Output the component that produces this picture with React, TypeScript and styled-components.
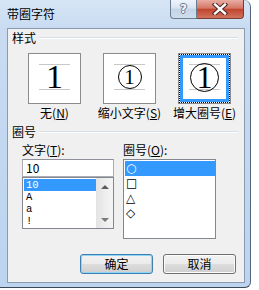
import React from "react";
import styled, { createGlobalStyle } from "styled-components";

const Global = createGlobalStyle`
  html, body { margin: 0; padding: 0; background: #ffffff; }
  body {
    font-family: "Noto Sans CJK SC", "Noto Sans", sans-serif;
    font-size: 12px;
    color: #000;
  }
`;

const Window = styled.div`
  width: 251px;
  height: 288px;
  box-sizing: border-box;
  display: flex;
  flex-direction: column;
  background: linear-gradient(180deg, #d7e6f6 0px, #c8dbf1 28px, #bcd4ef 100%);
  border-right: 1px solid #55657a;
  border-bottom: 1px solid #3d4854;
  border-radius: 0 7px 6px 0;
`;

const TitleBar = styled.div`
  height: 28px;
  flex-shrink: 0;
  display: flex;
  align-items: flex-start;
  padding: 0 6px 0 7px;
`;

const Title = styled.div`
  margin-top: 6px;
  line-height: 16px;
  font-size: 12px;
  color: #000;
`;

const CaptionButtons = styled.div`
  margin-left: auto;
  display: flex;
  height: 19px;
`;

const HelpButton = styled.div`
  width: 27px;
  height: 19px;
  box-sizing: border-box;
  border: 1px solid #6b7d93;
  border-top: none;
  border-radius: 0 0 0 4px;
  background: linear-gradient(180deg, #eef3fa 0%, #d9e4f1 45%, #c3d3e7 50%, #d0ddec 100%);
  display: flex;
  align-items: center;
  justify-content: center;
  font-family: "DejaVu Sans", sans-serif;
  font-weight: bold;
  font-size: 12px;
  line-height: 14px;
  color: #f4f7fb;
  text-shadow: 1px 0 0 #6a778c, -1px 0 0 #6a778c, 0 1px 0 #6a778c, 0 -1px 0 #6a778c;
`;

const CloseButton = styled.div`
  width: 47px;
  height: 19px;
  box-sizing: border-box;
  border: 1px solid #7d3a31;
  border-top: none;
  border-left: none;
  border-radius: 0 0 4px 0;
  background: linear-gradient(180deg, #e9ada3 0%, #d57867 45%, #c2452f 52%, #d07360 100%);
  display: flex;
  align-items: center;
  justify-content: center;
`;

const Client = styled.div`
  flex: 1;
  margin: 0 5px 4px 7px;
  box-sizing: border-box;
  border: 1px solid #8a9bb0;
  background: #f0f0f0;
  display: flex;
  flex-direction: column;
`;

const GroupHeader = styled.div<{ $top: number }>`
  height: 16px;
  margin-top: ${(p) => p.$top}px;
  padding: 0 6px 0 4px;
  display: flex;
  align-items: center;
  gap: 3px;
  line-height: 16px;
`;

const Rule = styled.div`
  flex: 1;
  height: 0;
  border-top: 1px solid #d5dfe5;
  border-bottom: 1px solid #ffffff;
`;

const OptionGrid = styled.div`
  display: grid;
  grid-template-columns: repeat(3, 75px);
  padding-left: 9px;
  margin-top: 7px;
`;

const Option = styled.div`
  display: flex;
  flex-direction: column;
  align-items: center;
  gap: 2px;
`;

const Box = styled.div<{ $selected?: boolean }>`
  width: 53px;
  height: 51px;
  box-sizing: border-box;
  border: 1px solid #8b8b8b;
  background: #ffffff;
  display: flex;
  flex-direction: column;
  align-items: stretch;
  padding-top: ${(p) => (p.$selected ? 0 : 10)}px;
`;

const FocusRing = styled.div`
  flex: 1;
  border: 1px dotted #000;
  display: flex;
`;

const Highlight = styled.div`
  flex: 1;
  border: 3px solid #3399ff;
  padding-top: 6px;
  display: flex;
  flex-direction: column;
  align-items: center;
`;

const Sample = styled.div`
  width: 31px;
  height: 26px;
  align-self: center;
  box-sizing: border-box;
  border-top: 1px solid #c8c8c8;
  border-bottom: 1px solid #c8c8c8;
  display: flex;
  align-items: center;
  justify-content: center;
`;

const Digit = styled.span<{ $size: number }>`
  font-family: "Liberation Serif", "Times New Roman", serif;
  font-size: ${(p) => p.$size}px;
  line-height: ${(p) => p.$size}px;
  color: #000;
`;

const Ring = styled.span<{ $d: number }>`
  width: ${(p) => p.$d}px;
  height: ${(p) => p.$d}px;
  flex-shrink: 0;
  box-sizing: border-box;
  border: 1.5px solid #000;
  border-radius: 50%;
  display: flex;
  align-items: center;
  justify-content: center;
`;

const OptionLabel = styled.div`
  line-height: 14px;
  white-space: nowrap;
`;

const Fields = styled.div`
  display: flex;
  margin-top: 3px;
  padding-left: 14px;
`;

const Field = styled.div<{ $w: number; $gap?: number }>`
  width: ${(p) => p.$w}px;
  margin-left: ${(p) => p.$gap ?? 0}px;
  display: flex;
  flex-direction: column;
`;

const FieldLabel = styled.div`
  line-height: 14px;
  margin-bottom: 2px;
  white-space: nowrap;
`;

const TextBox = styled.div`
  height: 18px;
  box-sizing: border-box;
  border: 1px solid #abadb3;
  border-top-color: #8e9199;
  background: #ffffff;
  padding-left: 3px;
  line-height: 16px;
`;

const ListBox = styled.div<{ $h: number }>`
  height: ${(p) => p.$h}px;
  box-sizing: border-box;
  border: 1px solid #828790;
  background: #ffffff;
  display: flex;
`;

const Items = styled.div<{ $pad: number }>`
  flex: 1;
  padding: ${(p) => p.$pad}px 0 0 1px;
  display: flex;
  flex-direction: column;
`;

const Item = styled.div<{ $h: number; $active?: boolean }>`
  height: ${(p) => p.$h}px;
  line-height: ${(p) => p.$h}px;
  padding-left: 2px;
  font-family: "Liberation Mono", "Courier New", monospace;
  font-size: 10.5px;
  background: ${(p) => (p.$active ? "#3399ff" : "transparent")};
  color: ${(p) => (p.$active ? "#ffffff" : "#000000")};
`;

const ShapeItem = styled(Item)`
  font-family: "DejaVu Sans", sans-serif;
  font-size: 12px;
  font-variant-emoji: text;
  padding-left: 1px;
`;

const ScrollBar = styled.div`
  width: 17px;
  background: linear-gradient(90deg, #e3e3e3 0%, #efefef 60%, #f4f4f4 100%);
  display: flex;
  flex-direction: column;
  justify-content: space-between;
`;

const ScrollButton = styled.div`
  height: 17px;
  display: flex;
  align-items: center;
  justify-content: center;
`;

const Arrow = styled.span<{ $down?: boolean }>`
  width: 0;
  height: 0;
  border-left: 4px solid transparent;
  border-right: 4px solid transparent;
  ${(p) =>
    p.$down
      ? "border-top: 4px solid #7a7a7a;"
      : "border-bottom: 4px solid #5c5c5c;"}
`;

const ButtonRow = styled.div`
  margin-top: auto;
  margin-bottom: 8px;
  padding-right: 8px;
  display: flex;
  justify-content: flex-end;
  gap: 10px;
`;

const Button = styled.div<{ $default?: boolean }>`
  width: 73px;
  height: 20px;
  box-sizing: border-box;
  border: 1px solid ${(p) => (p.$default ? "#3c7fb1" : "#707070")};
  border-radius: 3px;
  background: linear-gradient(180deg, #f2f2f2 0%, #ebebeb 50%, #dddddd 51%, #cfcfcf 100%);
  box-shadow: ${(p) => (p.$default ? "inset 0 0 0 1px #8fd3f5" : "inset 0 0 0 1px #fbfbfb")};
  display: flex;
  align-items: center;
  justify-content: center;
  line-height: 16px;
`;

const CloseGlyph = () => (
  <svg width="16" height="12" viewBox="0 0 16 12">
    <path d="M3 1.5 L13 10.5 M13 1.5 L3 10.5" stroke="#4a2620" strokeWidth="4.4" strokeLinecap="square" fill="none" />
    <path d="M3 1.5 L13 10.5 M13 1.5 L3 10.5" stroke="#ffffff" strokeWidth="2.4" strokeLinecap="square" fill="none" />
  </svg>
);

export default function App() {
  return (
    <>
      <Global />
      <Window>
        <TitleBar>
          <Title>带圈字符</Title>
          <CaptionButtons>
            <HelpButton>?</HelpButton>
            <CloseButton>
              <CloseGlyph />
            </CloseButton>
          </CaptionButtons>
        </TitleBar>
        <Client>
          <GroupHeader $top={1}>
            <span>样式</span>
            <Rule />
          </GroupHeader>
          <OptionGrid>
            <Option>
              <Box>
                <Sample>
                  <Digit $size={34}>1</Digit>
                </Sample>
              </Box>
              <OptionLabel>
                无(<u>N</u>)
              </OptionLabel>
            </Option>
            <Option>
              <Box>
                <Sample>
                  <Ring $d={24}>
                    <Digit $size={21}>1</Digit>
                  </Ring>
                </Sample>
              </Box>
              <OptionLabel>
                缩小文字(<u>S</u>)
              </OptionLabel>
            </Option>
            <Option>
              <Box $selected>
                <FocusRing>
                  <Highlight>
                    <Sample>
                      <Ring $d={29}>
                        <Digit $size={32}>1</Digit>
                      </Ring>
                    </Sample>
                  </Highlight>
                </FocusRing>
              </Box>
              <OptionLabel>
                增大圈号(<u>E</u>)
              </OptionLabel>
            </Option>
          </OptionGrid>
          <GroupHeader $top={4}>
            <span>圈号</span>
            <Rule />
          </GroupHeader>
          <Fields>
            <Field $w={92}>
              <FieldLabel>
                文字(<u>T</u>):
              </FieldLabel>
              <TextBox>10</TextBox>
              <ListBox $h={52}>
                <Items $pad={1}>
                  <Item $h={12} $active>10</Item>
                  <Item $h={12}>A</Item>
                  <Item $h={12}>a</Item>
                  <Item $h={12}>!</Item>
                </Items>
                <ScrollBar>
                  <ScrollButton>
                    <Arrow />
                  </ScrollButton>
                  <ScrollButton>
                    <Arrow $down />
                  </ScrollButton>
                </ScrollBar>
              </ListBox>
            </Field>
            <Field $w={93} $gap={9}>
              <FieldLabel>
                圈号(<u>O</u>):
              </FieldLabel>
              <ListBox $h={80}>
                <Items $pad={1}>
                  <ShapeItem $h={15} $active>○</ShapeItem>
                  <ShapeItem $h={15}>□</ShapeItem>
                  <ShapeItem $h={15}>△</ShapeItem>
                  <ShapeItem $h={15}>◇</ShapeItem>
                </Items>
              </ListBox>
            </Field>
          </Fields>
          <ButtonRow>
            <Button $default>确定</Button>
            <Button>取消</Button>
          </ButtonRow>
        </Client>
      </Window>
    </>
  );
}
